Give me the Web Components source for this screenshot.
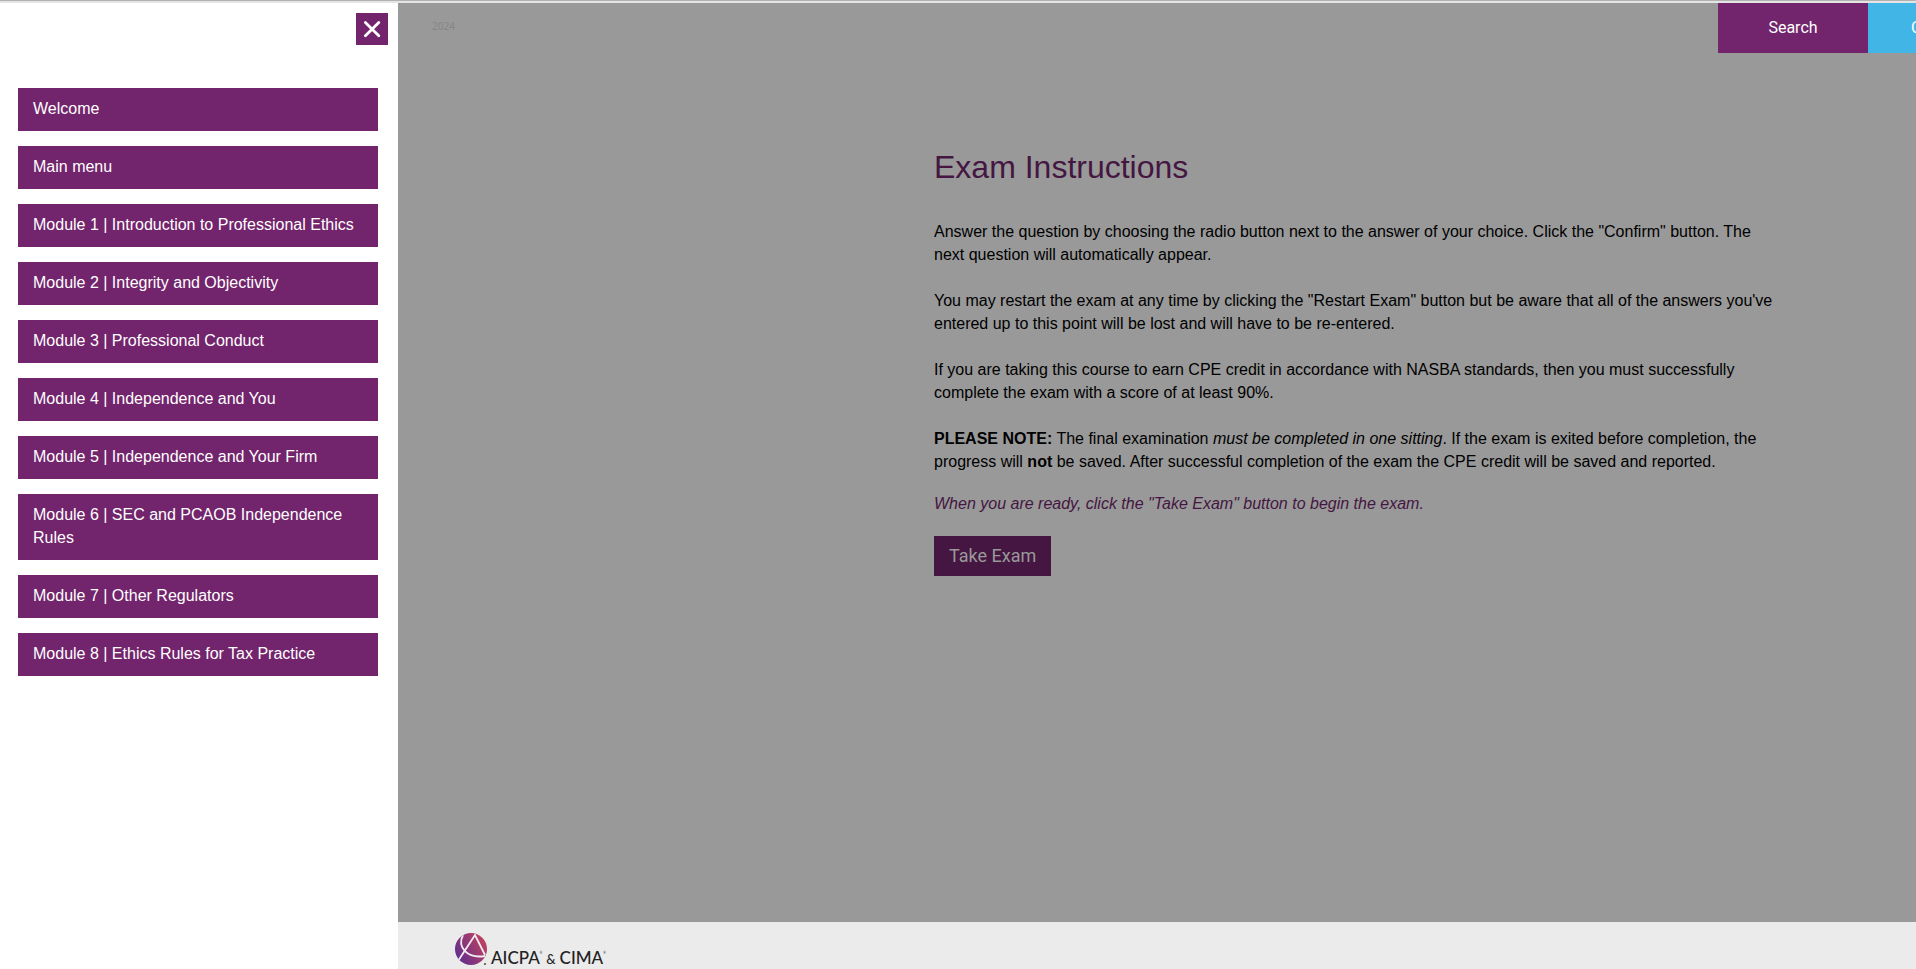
<!DOCTYPE html>
<html lang="en">
<head>
<meta charset="utf-8">
<title>Exam Instructions</title>
<style>
    html, body {
        height: 100%;
        margin: 0;
    }

    body {
        overflow: hidden;
        font: 16px/23px "Liberation Sans", Arial, sans-serif;
        --purple: #72246c;
        --purple-dim: #441641;
        --blue: #41b6e6;
        --dim: #999;
    }
</style>
</head>
<body>
<course-shell>
    <side-menu slot="menu">
        <menu-item>Welcome</menu-item>
        <menu-item>Main menu</menu-item>
        <menu-item>Module 1 | Introduction to Professional Ethics</menu-item>
        <menu-item>Module 2 | Integrity and Objectivity</menu-item>
        <menu-item>Module 3 | Professional Conduct</menu-item>
        <menu-item>Module 4 | Independence and You</menu-item>
        <menu-item>Module 5 | Independence and Your Firm</menu-item>
        <menu-item>Module 6 | SEC and PCAOB Independence Rules</menu-item>
        <menu-item>Module 7 | Other Regulators</menu-item>
        <menu-item>Module 8 | Ethics Rules for Tax Practice</menu-item>
    </side-menu>
    <top-bar slot="header" edition="2024"></top-bar>
    <exam-intro></exam-intro>
    <brand-footer slot="footer"></brand-footer>
</course-shell>

<script>
const makeTemplate = (html) => {
    const template = document.createElement('template');
    template.innerHTML = html;
    return template;
};

class BaseElement extends HTMLElement {
    constructor() {
        super();
        this.attachShadow({mode: 'open'}).appendChild(this.constructor.template.content.cloneNode(true));
    }
}

// The page keeps its full width while the menu is open, so it runs off the right edge.
class CourseShell extends BaseElement {
    static template = makeTemplate(`
        <style>
            :host {
                box-sizing: border-box;
                display: flex;
                height: 100%;
                overflow: hidden;
                border-top: 1px solid #b1b1b1;
            }

            ::slotted([slot=menu]), .page {
                border-top: 2px solid #e5e5e5;
            }

            .page {
                box-sizing: border-box;
                display: flex;
                flex: none;
                flex-direction: column;
                width: 100%;
                background: var(--dim);
            }

            main {
                flex: 1;
            }
        </style>
        <slot name="menu"></slot>
        <div class="page">
            <slot name="header"></slot>
            <main><slot></slot></main>
            <slot name="footer"></slot>
        </div>
    `);
}

class SideMenu extends BaseElement {
    static template = makeTemplate(`
        <style>
            :host {
                box-sizing: border-box;
                display: flex;
                flex: none;
                flex-direction: column;
                width: 398px;
                padding: 10px 10px 0 18px;
                background: #fff;
            }

            button {
                display: flex;
                align-items: center;
                justify-content: center;
                align-self: flex-end;
                width: 32px;
                height: 32px;
                padding: 0;
                border: 0;
                background: var(--purple);
            }

            nav {
                display: flex;
                flex-direction: column;
                gap: 15px;
                margin: 43px 10px 0 0;
            }
        </style>
        <button type="button" aria-label="Close">
            <svg width="18" height="18" viewBox="0 0 18 18" fill="none" stroke="#fff" stroke-width="2.8" stroke-linecap="round">
                <path d="M2.4 2.4l13.4 13.4M15.8 2.4L2.4 15.8"/>
            </svg>
        </button>
        <nav><slot></slot></nav>
    `);
}

class MenuItem extends BaseElement {
    static template = makeTemplate(`
        <style>
            :host {
                display: block;
            }

            a {
                display: block;
                padding: 9px 15px 11px;
                background: var(--purple);
                color: #fff;
                text-decoration: none;
            }
        </style>
        <a href="#"><slot></slot></a>
    `);
}

class TopBar extends BaseElement {
    static template = makeTemplate(`
        <style>
            :host {
                display: flex;
                height: 50px;
            }

            span {
                flex: 1;
                padding: 13px 34px 0;
                color: #868686;
                font: 10px/20px "Noto Sans", sans-serif;
            }

            /* wide enough for the actions that sit past the window edge */
            .actions {
                display: flex;
                width: 596px;
            }

            button {
                width: 150px;
                padding: 0 0 2px;
                border: 0;
                background: var(--purple);
                color: #fff;
                font: 16px/23px Roboto, sans-serif;
            }

            .next {
                padding-left: 43px;
                background: var(--blue);
                text-align: left;
            }
        </style>
        <span></span>
        <div class="actions">
            <button type="button">Search</button>
            <button type="button" class="next">C</button>
        </div>
    `);

    connectedCallback() {
        this.shadowRoot.querySelector('span').textContent = this.getAttribute('edition');
    }
}

class ExamIntro extends BaseElement {
    static template = makeTemplate(`
        <style>
            :host {
                display: block;
                max-width: 844px;
                margin: 0 auto;
                padding-top: 96px;
                color: #000;
            }

            h1 {
                margin: 0 0 35px;
                color: var(--purple-dim);
                font-size: 32px;
                font-weight: 400;
                line-height: 36px;
            }

            p {
                margin: 0 0 23px;
            }

            p.note {
                margin-bottom: 19px;
            }

            p.ready {
                margin-bottom: 21px;
                color: var(--purple-dim);
                font-style: italic;
            }

            button {
                height: 40px;
                padding: 0 15px;
                border: 0;
                background: var(--purple-dim);
                color: #999;
                font: 18px/26px Roboto, sans-serif;
            }
        </style>
        <h1>Exam Instructions</h1>
        <p>Answer the question by choosing the radio button next to the answer of your choice. Click the "Confirm" button. The next question will automatically appear.</p>
        <p>You may restart the exam at any time by clicking the "Restart Exam" button but be aware that all of the answers you've entered up to this point will be lost and will have to be re-entered.</p>
        <p>If you are taking this course to earn CPE credit in accordance with NASBA standards, then you must successfully complete the exam with a score of at least 90%.</p>
        <p class="note"><b>PLEASE NOTE:</b> The final examination <i>must be completed in one sitting</i>. If the exam is exited before completion, the progress will <b>not</b> be saved. After successful completion of the exam the CPE credit will be saved and reported.</p>
        <p class="ready">When you are ready, click the "Take Exam" button to begin the exam.</p>
        <button type="button">Take Exam</button>
    `);
}

class BrandFooter extends BaseElement {
    static template = makeTemplate(`
        <style>
            :host {
                display: flex;
                align-items: flex-end;
                height: 44px;
                padding: 0 57px 3px;
                background: #ebebeb;
            }

            .name {
                display: flex;
                align-items: baseline;
                gap: 4px;
                color: #222;
                font: 500 17px/14px Lato, sans-serif;
            }

            small {
                font-size: 13px;
            }

            sup {
                font-size: 3px;
                line-height: 3px;
                vertical-align: 10px;
            }
        </style>
        <svg width="36" height="34" viewBox="0 0 36 34" aria-hidden="true">
            <defs>
                <linearGradient id="ball" x1="0" y1="0.8" x2="1" y2="0.2">
                    <stop offset="0" stop-color="#5c2d91"/>
                    <stop offset="1" stop-color="#c5435c"/>
                </linearGradient>
                <clipPath id="disc"><circle cx="16" cy="17" r="16"/></clipPath>
            </defs>
            <circle cx="16" cy="17" r="16" fill="url(#ball)"/>
            <g clip-path="url(#disc)" fill="none" stroke="#f3edf3" stroke-width="1.8">
                <path d="M3 29L20 3L30 23"/>
                <path d="M8 3C2 15 12 27 30 24"/>
            </g>
            <circle cx="30" cy="32" r="1" fill="#444"/>
        </svg>
        <div class="name"><span>AICPA<sup>®</sup></span><small>&amp;</small><span>CIMA<sup>®</sup></span></div>
    `);
}

customElements.define('course-shell', CourseShell);
customElements.define('side-menu', SideMenu);
customElements.define('menu-item', MenuItem);
customElements.define('top-bar', TopBar);
customElements.define('exam-intro', ExamIntro);
customElements.define('brand-footer', BrandFooter);
</script>
</body>
</html>
